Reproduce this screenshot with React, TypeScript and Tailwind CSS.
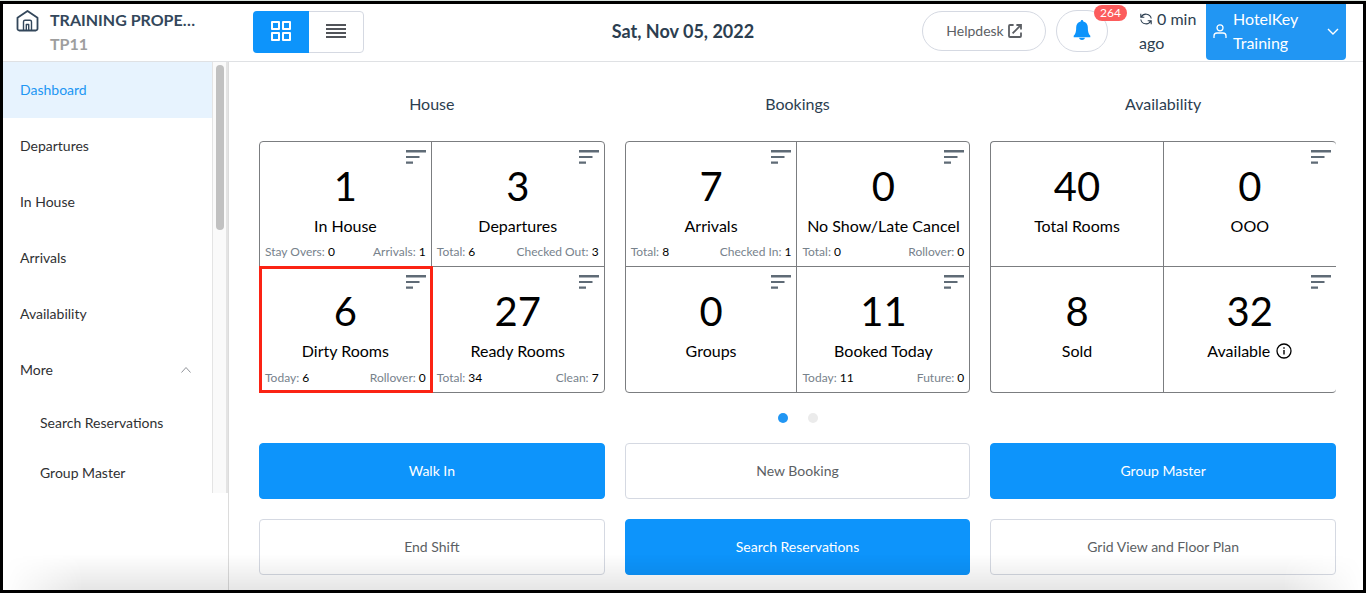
import type { ReactNode } from "react";

type Detail = { name: string; value: number };

type Stat = {
  value: number;
  label: string;
  menu?: boolean;
  info?: boolean;
  highlighted?: boolean;
  details?: Detail[];
};

type Group = { title: string; stats: Stat[]; clipped?: boolean };

const groups: Group[] = [
  {
    title: "House",
    stats: [
      { value: 1, label: "In House", menu: true, details: [{ name: "Stay Overs", value: 0 }, { name: "Arrivals", value: 1 }] },
      { value: 3, label: "Departures", menu: true, details: [{ name: "Total", value: 6 }, { name: "Checked Out", value: 3 }] },
      { value: 6, label: "Dirty Rooms", menu: true, highlighted: true, details: [{ name: "Today", value: 6 }, { name: "Rollover", value: 0 }] },
      { value: 27, label: "Ready Rooms", menu: true, details: [{ name: "Total", value: 34 }, { name: "Clean", value: 7 }] },
    ],
  },
  {
    title: "Bookings",
    stats: [
      { value: 7, label: "Arrivals", menu: true, details: [{ name: "Total", value: 8 }, { name: "Checked In", value: 1 }] },
      { value: 0, label: "No Show/Late Cancel", menu: true, details: [{ name: "Total", value: 0 }, { name: "Rollover", value: 0 }] },
      { value: 0, label: "Groups", menu: true },
      { value: 11, label: "Booked Today", menu: true, details: [{ name: "Today", value: 11 }, { name: "Future", value: 0 }] },
    ],
  },
  {
    title: "Availability",
    clipped: true,
    stats: [
      { value: 40, label: "Total Rooms" },
      { value: 0, label: "OOO", menu: true },
      { value: 8, label: "Sold" },
      { value: 32, label: "Available", menu: true, info: true },
    ],
  },
];

const navItems = ["Dashboard", "Departures", "In House", "Arrivals", "Availability"];
const moreItems = ["Search Reservations", "Group Master"];

const actions = [
  { label: "Walk In", primary: true },
  { label: "New Booking", primary: false },
  { label: "Group Master", primary: true },
  { label: "End Shift", primary: false },
  { label: "Search Reservations", primary: true },
  { label: "Grid View and Floor Plan", primary: false },
];

const HomeIcon = () => (
  <svg className="size-6 shrink-0" viewBox="0 0 24 24" fill="none" stroke="#33475b" strokeWidth="1.8" strokeLinejoin="round">
    <path d="M2.500 9.800 12.500 3l10 6.800v10.900a1.800 1.800 0 0 1-1.800 1.800H4.300a1.800 1.800 0 0 1-1.800-1.800z" />
    <path d="M8.500 22.500v-8.700a1.500 1.500 0 0 1 1.500-1.500h5a1.500 1.500 0 0 1 1.500 1.500v8.700M11.300 22.500v-6h2.400v6" strokeWidth="1.400" />
  </svg>
);

const GridIcon = () => (
  <svg className="size-5" viewBox="0 0 20 20" fill="none" stroke="currentColor" strokeWidth="2">
    <path d="M1 1h7v7H1zM12 1h7v7h-7zM1 12h7v7H1zM12 12h7v7h-7z" strokeLinejoin="round" />
  </svg>
);

const ListIcon = () => (
  <svg className="h-[14px] w-5" viewBox="0 0 20 14" fill="#515459">
    <path d="M0 0h20v2H0zM0 4h20v2H0zM0 8h20v2H0zM0 12h20v2H0z" />
  </svg>
);

const ExternalIcon = () => (
  <svg className="size-[14px]" viewBox="0 0 14 14" fill="none" stroke="currentColor" strokeWidth="1.8">
    <path d="M5.600 1H2a1 1 0 0 0-1 1v10a1 1 0 0 0 1 1h10a1 1 0 0 0 1-1V8.400" />
    <path d="M8.400 1H13v4.600M12.800 1.200 4.600 9.400" />
  </svg>
);

const BellIcon = () => (
  <svg className="h-5 w-[18px]" viewBox="0 0 18 20" fill="#0d94fb">
    <path d="M9 0c.9 0 1.300.7 1.300 1.500 2.800.6 4.500 2.900 4.500 5.600 0 4.200.5 6.900 2.500 8.700v1.400H.7v-1.400c2-1.800 2.500-4.500 2.500-8.700 0-2.700 1.700-5 4.500-5.600C7.700.7 8.100 0 9 0z" />
    <path d="M6.200 17.800h5.600a2.800 2.100 0 0 1-5.600 0z" />
  </svg>
);

const RefreshIcon = () => (
  <svg className="mr-1 inline-block size-[14px] align-[-1px]" viewBox="0 0 14 14" fill="none" stroke="currentColor" strokeWidth="1.1">
    <path d="M2.200 5.200A5.300 5.300 0 0 1 12.200 6.500M1.800 1.800v3.500h3.500" />
    <path d="M11.800 8.800A5.300 5.300 0 0 1 1.800 7.500M12.200 12.200V8.700H8.700" />
  </svg>
);

const UserIcon = () => (
  <svg className="size-[14px] shrink-0" viewBox="0 0 14 14" fill="none" stroke="currentColor" strokeWidth="1.3">
    <circle cx="7" cy="3.800" r="3" />
    <path d="M1 14v-2a3 3 0 0 1 3-3h6a3 3 0 0 1 3 3v2" />
  </svg>
);

const FilterIcon = () => (
  <svg className="h-[14px] w-5" viewBox="0 0 20 14" fill="#5f6b76">
    <path d="M0 0h20v2.400H0zM0 6h13.500v2H0zM0 11.500h7v2.200H0z" />
  </svg>
);

const InfoIcon = () => (
  <svg className="size-4" viewBox="0 0 16 16" fill="none" stroke="currentColor" strokeWidth="1.3">
    <circle cx="8" cy="8" r="7" />
    <path d="M8 7v4.500M8 4.300v1.500" strokeWidth="1.400" />
  </svg>
);

const StatCell = ({ stat }: { stat: Stat }) => (
  <div className="relative flex h-[124px] flex-col items-center border-[#7b7d80] pt-5 text-black odd:border-r nth-[n+3]:h-[126px] nth-[n+3]:border-t">
    {stat.menu && (
      <button type="button" aria-label={`${stat.label} list`} className="absolute top-2 right-[5px]">
        <FilterIcon />
      </button>
    )}
    <span className="text-[40px] leading-12">{stat.value}</span>
    <span className="mt-1 flex items-center gap-[6px] text-base leading-6">
      {stat.label}
      {stat.info && <InfoIcon />}
    </span>
    {stat.details && (
      <div className="mt-auto flex w-full justify-between px-[5px] pb-[6px] text-xs leading-4 text-[#77828c]">
        {stat.details.map((detail) => (
          <span key={detail.name}>
            {detail.name}: <span className="text-black">{detail.value}</span>
          </span>
        ))}
      </div>
    )}
    {stat.highlighted && <div className="absolute -inset-px -right-[2px] z-10 border-[3px] border-[#fb2314]" />}
  </div>
);

const StatGroup = ({ group }: { group: Group }) => (
  <section>
    <h2 className="text-center text-base leading-6 text-[#2c3e50]">{group.title}</h2>
    <div
      className={`mt-[25px] grid grid-cols-2 rounded border border-[#7b7d80] ${group.clipped ? "border-r-0" : ""}`}
    >
      {group.stats.map((stat) => (
        <StatCell key={stat.label} stat={stat} />
      ))}
    </div>
  </section>
);

const NavLink = ({ children, active = false }: { children: ReactNode; active?: boolean }) => (
  <a
    href="#"
    className={`flex h-14 shrink-0 items-center pl-[17px] ${active ? "bg-[#e7f3fe] text-[#2196f3]" : ""}`}
  >
    {children}
  </a>
);

const Header = () => (
  <header className="grid h-[58px] grid-cols-[1fr_auto_1fr] border-b border-[#dfe1e4]">
    <div className="flex">
      <div className="flex w-[250px] shrink-0 pt-1 pl-3">
        <HomeIcon />
        <div className="ml-[11px] text-base leading-6 font-bold">
          <p className="text-[#33475b]">TRAINING PROPE…</p>
          <p className="text-[#9e9e9e]">TP11</p>
        </div>
      </div>
      <div className="mt-[7px] flex h-[42px] w-[111px] rounded border border-[#d5d9e2]">
        <button type="button" aria-label="Grid view" className="-my-px -ml-px flex w-14 items-center justify-center rounded-l bg-[#0d94fb] pb-[2px] text-white">
          <GridIcon />
        </button>
        <button type="button" aria-label="List view" className="flex flex-1 items-center justify-center pb-[2px]">
          <ListIcon />
        </button>
      </div>
    </div>

    <h1 className="self-center pb-1 text-lg leading-7 font-bold text-[#2c3e50]">Sat, Nov 05, 2022</h1>

    <div className="flex justify-end pr-[17px]">
      <a href="#" className="mt-[7px] flex h-10 w-[124px] items-center justify-center gap-1 rounded-full border border-[#d5d9e2] text-sm text-[#5c5f64]">
        Helpdesk
        <ExternalIcon />
      </a>
      <button type="button" aria-label="Notifications" className="relative mt-[6px] ml-[10px] flex h-[42px] w-[52px] items-center justify-center rounded-full border border-[#d5d9e2] pb-[2px]">
        <BellIcon />
        <span className="absolute -top-[6px] -right-5 h-4 rounded-full bg-[#fc5c5c] px-[6px] text-xs leading-4 text-white">
          264
        </span>
      </button>
      <p className="mt-[3px] ml-[31px] w-[67px] text-base leading-6 text-[#2c3e50]">
        <RefreshIcon />0 min ago
      </p>
      <button type="button" className="flex h-14 w-[140px] items-center rounded-b bg-[#2196f3] px-[7px] pb-[2px] text-left text-base leading-6 text-white">
        <UserIcon />
        <span className="ml-[6px] flex-1">
          HotelKey
          <br />
          Training
        </span>
        <svg className="h-[7px] w-3" viewBox="0 0 12 7" fill="none" stroke="currentColor" strokeWidth="1.400">
          <path d="m1 1 5 5 5-5" />
        </svg>
      </button>
    </div>
  </header>
);

const Sidebar = () => (
  <aside className="w-[226px] shrink-0 border-r border-[#dcdcdc]">
    <div className="flex h-[calc(100vh-162px)]">
      <nav className="flex flex-1 flex-col overflow-hidden text-sm text-[#303133]">
        {navItems.map((item) => (
          <NavLink key={item} active={item === "Dashboard"}>
            {item}
          </NavLink>
        ))}
        <button type="button" className="flex h-14 shrink-0 items-center justify-between pr-[21px] pl-[17px]">
          More
          <svg className="h-[6px] w-[10px]" viewBox="0 0 10 6" fill="none" stroke="#909399" strokeWidth="1">
            <path d="m.5 5.500 4.500-5 4.500 5" />
          </svg>
        </button>
        {moreItems.map((item) => (
          <a key={item} href="#" className="flex h-[50px] shrink-0 items-center pl-[37px]">
            {item}
          </a>
        ))}
      </nav>
      <div className="w-4 border-r-2 border-l border-r-[#e4e4e4] border-l-[#e4e4e4] bg-[#fafafa] px-[3px] pt-[3px]">
        <div className="h-[165px] w-2 rounded-full bg-[#c1c1c1]" />
      </div>
    </div>
  </aside>
);

const App = () => {
  return (
    <div className="flex min-h-screen flex-col bg-[#dbe4df] pt-px font-[Lato,'Liberation_Sans',sans-serif]">
      <div className="relative flex flex-1 flex-col border-[3px] border-black bg-white">
        <Header />
        <div className="flex flex-1">
          <Sidebar />
          <main className="flex-1 pt-[30px] pr-[27px] pb-[15px] pl-[30px]">
            <div className="grid grid-cols-3 gap-5">
              {groups.map((group) => (
                <StatGroup key={group.title} group={group} />
              ))}
            </div>

            <div className="mt-5 flex justify-center gap-5">
              <button type="button" aria-label="Page 1" className="size-[10px] rounded-full bg-[#2196f3]" />
              <button type="button" aria-label="Page 2" className="size-[10px] rounded-full bg-[#ebebeb]" />
            </div>

            <div className="mt-5 grid grid-cols-3 gap-5">
              {actions.map((action) => (
                <button
                  key={action.label}
                  type="button"
                  className={`h-14 rounded border text-sm ${
                    action.primary
                      ? "border-[#0d94fb] bg-[#0d94fb] text-white"
                      : "border-[#d5d9e2] bg-white text-[#5c5f64]"
                  }`}
                >
                  {action.label}
                </button>
              ))}
            </div>
          </main>
        </div>
        <div className="pointer-events-none absolute inset-x-0 bottom-0 h-9 bg-linear-to-t from-black/10 to-transparent mask-[linear-gradient(to_right,transparent,black_80px,black_calc(100%-80px),transparent)]" />
      </div>
    </div>
  );
};

export default App;
